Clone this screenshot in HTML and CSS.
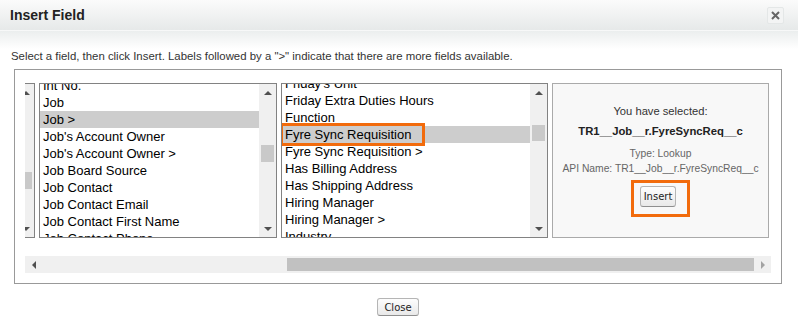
FILE: index.html
```html
<!DOCTYPE html>
<html>
  <head>
    <meta charset="UTF-8">
    <title>Insert Field</title>
    <link rel="stylesheet" href="styles.css">
  </head>
  <body>
    <div class="dialog">
      <!-- Cabeçalho -->
      <div class="dialog-head">
        <h2>Insert Field</h2>
        <button type="button" class="head-close" title="Close">
          <svg width="9" height="9" viewBox="0 0 9 9"><path d="M1 1L8 8M8 1L1 8" stroke="#666" stroke-width="2"/></svg>
        </button>
      </div>

      <div class="dialog-body">
        <p class="hint">Select a field, then click Insert. Labels followed by a "&gt;" indicate that there are more fields available.</p>

        <div class="panel">
          <div class="columns">
            <!-- lista anterior, quase toda fora da área visível -->
            <div class="list list-stub">
              <div class="vbar">
                <span class="arrow up"></span>
                <div class="track"><div class="thumb" style="margin-top: 71px"></div></div>
                <span class="arrow down"></span>
              </div>
            </div>

            <div class="list list-job">
              <div class="items">
                <ul style="margin-top: -7px">
                  <li>Int No.</li>
                  <li>Job</li>
                  <li class="selected">Job &gt;</li>
                  <li>Job's Account Owner</li>
                  <li>Job's Account Owner &gt;</li>
                  <li>Job Board Source</li>
                  <li>Job Contact</li>
                  <li>Job Contact Email</li>
                  <li>Job Contact First Name</li>
                  <li>Job Contact Phone</li>
                </ul>
              </div>
              <div class="vbar">
                <span class="arrow up"></span>
                <div class="track"><div class="thumb" style="margin-top: 44px"></div></div>
                <span class="arrow down"></span>
              </div>
            </div>

            <div class="list list-fields">
              <div class="items">
                <ul style="margin-top: -9px">
                  <li>Friday's Unit</li>
                  <li>Friday Extra Duties Hours</li>
                  <li>Function</li>
                  <li class="selected marked">Fyre Sync Requisition</li>
                  <li>Fyre Sync Requisition &gt;</li>
                  <li>Has Billing Address</li>
                  <li>Has Shipping Address</li>
                  <li>Hiring Manager</li>
                  <li>Hiring Manager &gt;</li>
                  <li>Industry</li>
                </ul>
              </div>
              <div class="vbar">
                <span class="arrow up"></span>
                <div class="track"><div class="thumb" style="margin-top: 24px; height: 16px"></div></div>
                <span class="arrow down"></span>
              </div>
            </div>

            <div class="selected-info">
              <p class="sel-label">You have selected:</p>
              <p class="sel-name">TR1__Job__r.FyreSyncReq__c</p>
              <p class="sel-meta">Type: Lookup</p>
              <p class="sel-meta">API Name: TR1__Job__r.FyreSyncReq__c</p>
              <span class="mark-box"><button type="button" class="btn btn-insert">Insert</button></span>
            </div>
          </div>

          <div class="hbar">
            <span class="arrow left"></span>
            <div class="htrack"><div class="hthumb"></div></div>
            <span class="arrow right off"></span>
          </div>
        </div>

        <div class="dialog-foot">
          <button type="button" class="btn btn-close">Close</button>
        </div>
      </div>
    </div>
  </body>
</html>
```

FILE: styles.css
```css
/* Base */
body {
  margin: 0;
  background: #fff;
  font-family: Arial, "Liberation Sans", sans-serif;
  color: #333;
}

p {
  margin: 0;
}

/* Cabeçalho do diálogo */
.dialog-head {
  height: 30px;
  display: flex;
  align-items: center;
  justify-content: space-between;
  padding: 0 14px 0 10px;
  background: linear-gradient(#fbfbfb, #e6e9e9);
  border-bottom: 1px solid #f7f8f8;
}

.dialog-head h2 {
  margin: 0;
  font-size: 14px;
  font-weight: bold;
  color: #222;
}

.head-close {
  width: 17px;
  height: 17px;
  padding: 0;
  margin-top: 1px;
  display: flex;
  align-items: center;
  justify-content: center;
  background: #f3f4f4;
  border: 1px solid #e4e7e7;
  border-radius: 2px;
}

/* Corpo */
.dialog-body {
  background: linear-gradient(#ebeeee, #fff 18px);
  padding: 19px 16px 0 12px;
}

.hint {
  font-size: 11.4px;
  line-height: 13px;
  color: #333;
  margin-left: -1px;
}

.panel {
  margin: 6px 0 0 2px;
  border: 1px solid #999;
  padding: 13px 10px 10px 10px;
}

.columns {
  display: flex;
  gap: 4px;
  height: 155px;
}

/* Listas */
.list {
  display: flex;
  border: 1px solid #828282;
  background: #fff;
  overflow: hidden;
}

.list-stub {
  width: 9px;
  border-left: none;
}

.list-stub .vbar {
  margin-left: -8px;
}

.list-job {
  width: 236px;
}

.list-fields {
  width: 265px;
}

.items {
  flex: 1;
  overflow: hidden;
}

.items ul {
  list-style: none;
  margin: 0;
  padding: 0;
}

.items li {
  position: relative;
  height: 17px;
  line-height: 17px;
  padding-left: 3px;
  font-size: 13px;
  color: #000;
  white-space: nowrap;
}

.items li.selected {
  background: #cdcdcd;
}

.items li.marked::after {
  content: "";
  position: absolute;
  left: -2px;
  top: -3px;
  width: 139px;
  height: 17px;
  border: 3px solid #f26b0c;
}

/* Barras de rolagem */
.vbar {
  width: 17px;
  flex: none;
  display: flex;
  flex-direction: column;
  background: #f0f0f0;
}

.vbar .arrow {
  height: 17px;
  flex: none;
}

.track {
  flex: 1;
}

.thumb {
  height: 17px;
  margin: 0 2px;
  background: #c9c9c9;
}

.arrow {
  display: flex;
  align-items: center;
  justify-content: center;
}

.arrow::before {
  content: "";
  border: 4px solid transparent;
}

.arrow.up::before {
  border-top: none;
  border-bottom: 4px solid #505050;
}

.arrow.down::before {
  border-bottom: none;
  border-top: 4px solid #505050;
}

.arrow.left::before {
  border-left: none;
  border-right: 4px solid #505050;
}

.arrow.right::before {
  border-right: none;
  border-left: 4px solid #505050;
}

.arrow.off::before {
  border-left-color: #a3a3a3;
}

.hbar {
  display: flex;
  height: 17px;
  margin-top: 18px;
  background: #f0f0f0;
}

.hbar .arrow {
  width: 17px;
  flex: none;
}

.htrack {
  flex: 1;
  display: flex;
  align-items: center;
}

.hthumb {
  height: 13px;
  margin-left: 245px;
  flex: 1;
  background: #c1c1c1;
}

/* Painel do campo selecionado */
.selected-info {
  width: 217px;
  border: 1px solid #aaa;
  background: #f8f8f8;
  text-align: center;
  padding-top: 20px;
  box-sizing: border-box;
}

.sel-label {
  font-size: 11.2px;
  line-height: 14px;
  color: #333;
}

.sel-name {
  margin-top: 6px;
  font-size: 11.3px;
  line-height: 14px;
  font-weight: bold;
  color: #222;
}

.sel-meta {
  font-size: 10.3px;
  line-height: 15px;
  color: #666;
}

.sel-name + .sel-meta {
  margin-top: 8px;
}

.mark-box {
  display: inline-block;
  margin-top: 4px;
  padding: 3px 11px 7px 6px;
  border: 3px solid #f26b0c;
}

/* Botões */
.btn {
  font-family: "DejaVu Sans", Verdana, sans-serif;
  font-size: 10px;
  color: #222;
  background: linear-gradient(#fdfdfd, #e9e9e9);
  border: 1px solid #b5b5b5;
  border-bottom-color: #8f8f8f;
  border-radius: 3px;
  cursor: pointer;
}

.btn-insert {
  height: 21px;
  padding: 0 3px;
}

.btn-close {
  height: 18px;
  padding: 0 6px;
}

.dialog-foot {
  display: flex;
  justify-content: center;
  padding: 14px 0 0 2px;
}
```
